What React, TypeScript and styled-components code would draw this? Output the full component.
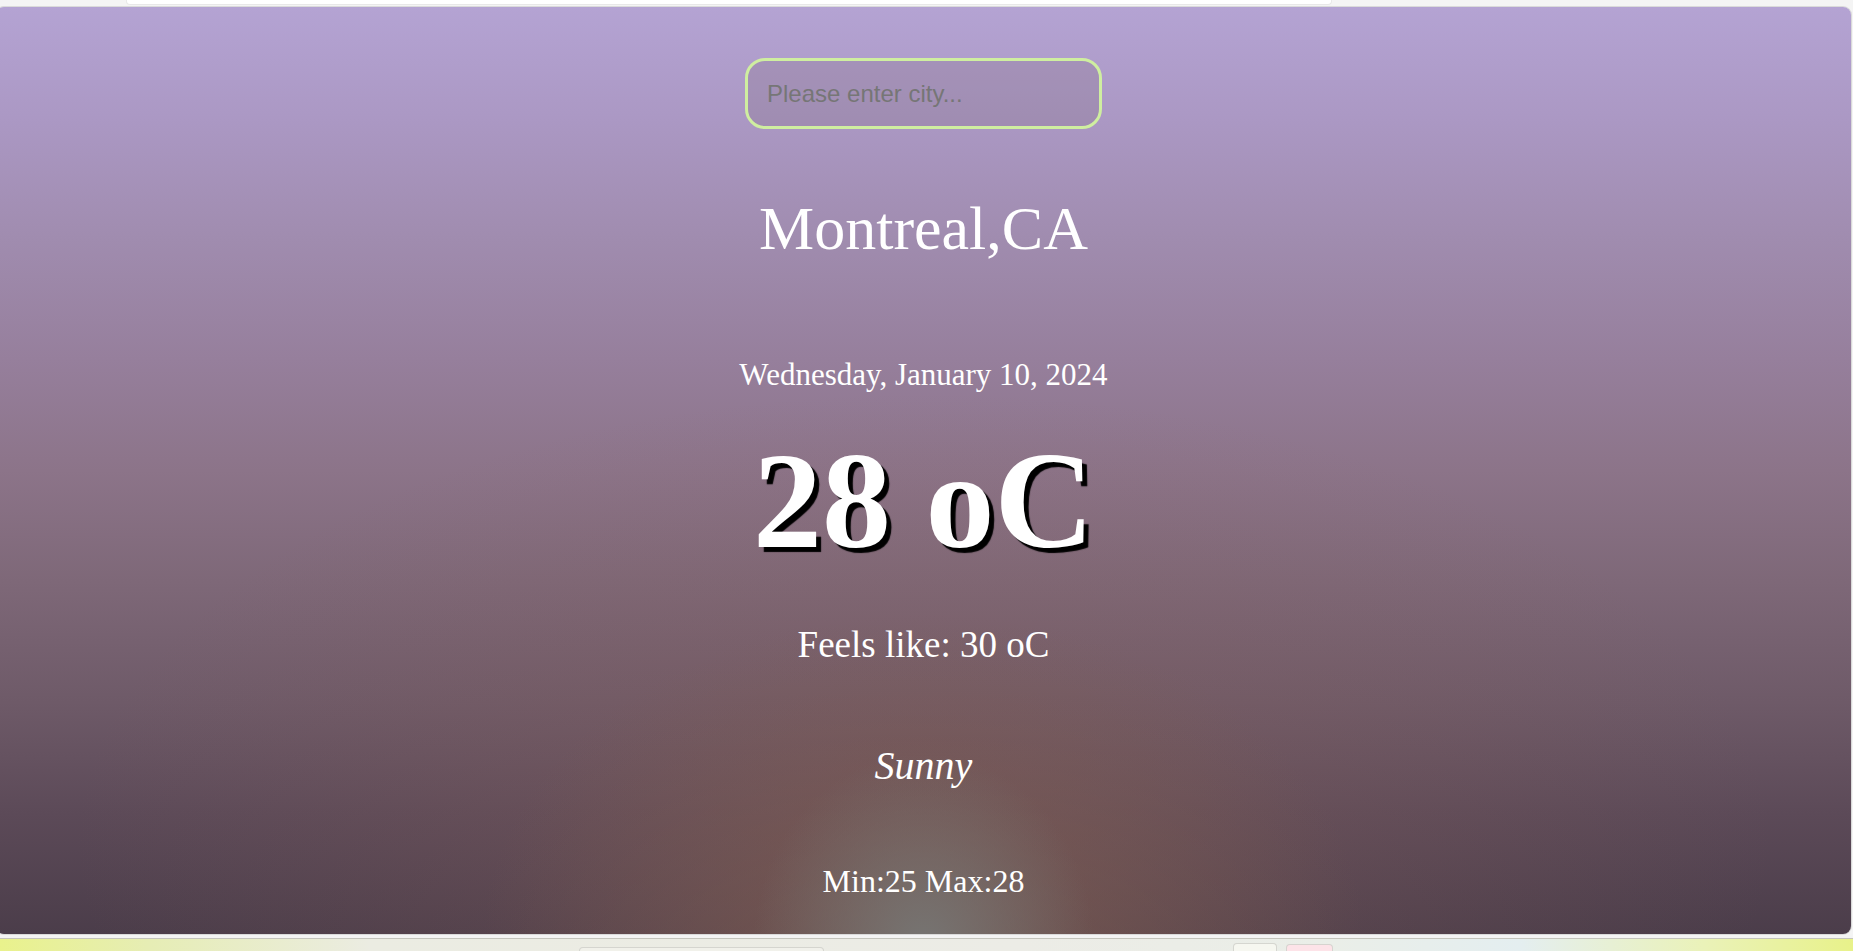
import React from "react";
import styled, { createGlobalStyle } from "styled-components";

const GlobalStyle = createGlobalStyle`
  html, body {
    margin: 0;
    padding: 0;
    height: 100%;
    overflow: hidden;
    background: #f4f4f4;
  }
  #root { width: 100%; }
`;

const Page = styled.div`
  width: 1853px;
  height: 951px;
  display: flex;
  flex-direction: column;
  overflow: hidden;
  background: #f4f4f4;
`;

const TopStrip = styled.div`
  height: 7px;
  flex: 0 0 7px;
  display: flex;
  padding-left: 126px;
  box-sizing: border-box;
`;

const TopTab = styled.div`
  width: 1206px;
  height: 5px;
  background: #ffffff;
  border: 1px solid #e8e8e8;
  border-top: none;
  border-radius: 0 0 4px 4px;
  box-sizing: border-box;
`;

const Card = styled.main`
  flex: 0 0 927px;
  height: 927px;
  width: 1855px;
  margin-left: -4px;
  box-sizing: border-box;
  border-radius: 8px;
  box-shadow: 0 0 0 1px rgba(200, 200, 200, 0.6);
  display: flex;
  flex-direction: column;
  align-items: center;
  padding-top: 51px;
  color: #ffffff;
  font-family: "Liberation Serif", "Times New Roman", serif;
  background:
    radial-gradient(ellipse 170px 190px at 50% 101%, rgba(118, 118, 116, 0.95), rgba(118, 118, 116, 0) 100%),
    radial-gradient(ellipse 440px 320px at 50% 100%, rgba(125, 92, 80, 0.75), rgba(125, 92, 80, 0) 100%),
    radial-gradient(ellipse 850px 450px at 50% 90%, rgba(135, 95, 90, 0.4), rgba(135, 95, 90, 0) 100%),
    linear-gradient(
      to bottom,
      #b4a3d3 0%,
      #ab98c4 12%,
      #a08caf 25%,
      #967f9c 38%,
      #8c7489 50%,
      #7e6878 62%,
      #6e5a68 75%,
      #5c4a58 87%,
      #4b3d4a 100%
    );
`;

const SearchInput = styled.input`
  width: 357px;
  height: 71px;
  box-sizing: border-box;
  border: 3px solid #cfeea0;
  border-radius: 20px;
  padding: 0 20px 0 19px;
  background: rgba(120, 100, 110, 0.2);
  font-family: "Liberation Sans", Arial, sans-serif;
  font-size: 24px;
  color: #333;
  outline: none;
  &::placeholder {
    color: #767676;
  }
`;

const CityName = styled.h1`
  margin: 68px 0 0;
  font-size: 62px;
  line-height: 62px;
  font-weight: normal;
  white-space: nowrap;
`;

const DateLine = styled.div`
  margin-top: 100px;
  font-size: 31px;
  line-height: 31px;
  white-space: nowrap;
`;

const Temperature = styled.div`
  margin-top: 42px;
  font-size: 138px;
  line-height: 138px;
  font-weight: bold;
  white-space: nowrap;
  text-shadow: 5px 5px 1px #000000;
`;

const FeelsLike = styled.div`
  margin-top: 56px;
  font-size: 37px;
  line-height: 37px;
  white-space: nowrap;
`;

const Condition = styled.div`
  margin-top: 83px;
  font-size: 40px;
  line-height: 40px;
  font-style: italic;
  white-space: nowrap;
`;

const MinMax = styled.div`
  margin-top: 79px;
  font-size: 32px;
  line-height: 32px;
  white-space: nowrap;
`;

const BottomArea = styled.div`
  flex: 1 1 auto;
  margin-top: 4px;
  border-top: 1px solid #c4c4bc;
  display: flex;
  align-items: flex-start;
  padding-top: 7px;
  box-sizing: border-box;
  background: linear-gradient(
    to right,
    #e9f28c 0%,
    #e6edb4 8%,
    #ebece2 20%,
    #ecece6 55%,
    #eaeee8 72%,
    #e4eef0 82%,
    #eaf2b8 92%,
    #e8f28a 100%
  );
`;

const BottomTab = styled.div<{ $offset: number; $w: number; $bg: string; $drop: number }>`
  margin-left: ${(p) => p.$offset}px;
  margin-top: ${(p) => p.$drop}px;
  width: ${(p) => p.$w}px;
  height: 12px;
  background: ${(p) => p.$bg};
  border: 1px solid rgba(210, 210, 205, 0.9);
  border-bottom: none;
  border-radius: 4px 4px 0 0;
  box-sizing: border-box;
`;

export default function App() {
  return (
    <>
      <GlobalStyle />
      <Page>
        <TopStrip>
          <TopTab />
        </TopStrip>
        <Card>
          <SearchInput type="text" placeholder="Please enter city..." />
          <CityName>Montreal,CA</CityName>
          <DateLine>Wednesday, January 10, 2024</DateLine>
          <Temperature>28 oC</Temperature>
          <FeelsLike>Feels like: 30 oC</FeelsLike>
          <Condition>Sunny</Condition>
          <MinMax>Min:25 Max:28</MinMax>
        </Card>
        <BottomArea>
          <BottomTab $offset={579} $w={245} $bg="rgba(245,245,238,0.6)" $drop={1} />
          <BottomTab $offset={409} $w={44} $bg="#f6f7f0" $drop={-3} />
          <BottomTab $offset={9} $w={47} $bg="#fde3e8" $drop={-2} />
        </BottomArea>
      </Page>
    </>
  );
}
